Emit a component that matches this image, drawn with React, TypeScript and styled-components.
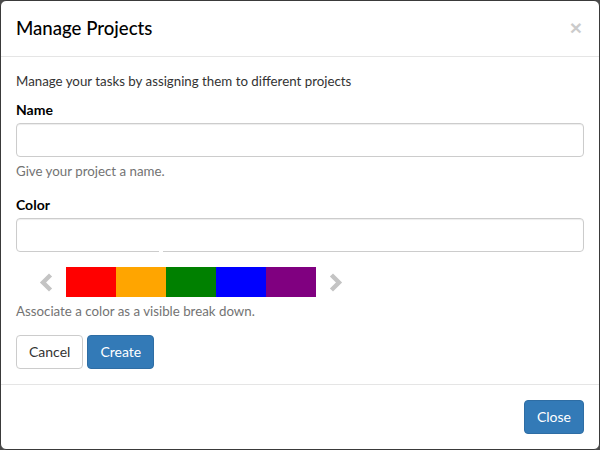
import styled, { createGlobalStyle } from 'styled-components';

const GlobalStyle = createGlobalStyle`
  html, body {
    margin: 0;
    padding: 0;
    background: #4a4a4a;
  }
  * {
    box-sizing: border-box;
  }
`;

const Modal = styled.div`
  width: 600px;
  height: 450px;
  background: #fff;
  border: 1px solid #3a3a3a;
  border-radius: 6px;
  font-family: 'Segoe UI', Lato, 'Liberation Sans', sans-serif;
  font-size: 13.3px;
  line-height: 20px;
  color: #333;
  display: flex;
  flex-direction: column;
  overflow: hidden;
`;

const Header = styled.div`
  display: flex;
  align-items: center;
  justify-content: space-between;
  padding: 15px;
  border-bottom: 1px solid #e5e5e5;
`;

const Title = styled.h4`
  margin: 0;
  font-size: 18.6px;
  font-weight: 500;
  line-height: 25px;
  color: #000;
`;

const CloseX = styled.button`
  border: none;
  background: none;
  padding: 0;
  font-family: 'Liberation Sans', sans-serif;
  font-size: 21px;
  font-weight: bold;
  line-height: 1;
  color: #000;
  opacity: 0.2;
  margin-top: -2px;
  margin-right: 2px;
`;

const Body = styled.div`
  padding: 14px 15px 15px;
  flex: 1;
`;

const Intro = styled.p`
  margin: 0 0 9px;
`;

const FormGroup = styled.div`
  margin-bottom: 14px;
`;

const Label = styled.label`
  display: block;
  font-weight: bold;
  font-size: 14px;
  color: #000;
  margin-bottom: 3px;
`;

const InputWrap = styled.div`
  position: relative;
`;

const Input = styled.input`
  display: block;
  width: 100%;
  height: 34px;
  padding: 6px 12px;
  border: 1px solid #ccc;
  border-radius: 4px;
  box-shadow: inset 0 1px 1px rgba(0, 0, 0, 0.075);
  font: inherit;
  color: #555;
`;

const Notch = styled.span`
  position: absolute;
  left: 143px;
  bottom: -1px;
  width: 4px;
  height: 3px;
  background: #fff;
`;

const Help = styled.span`
  display: block;
  margin-top: 4px;
  color: #737373;
`;

const Picker = styled.div`
  display: flex;
  align-items: center;
  margin-top: 15px;
  padding-left: 10px;
`;

const Arrow = styled.span`
  display: flex;
  width: 40px;
  justify-content: center;
`;

const Strip = styled.div`
  display: flex;
`;

const Swatch = styled.div<{ $color: string }>`
  width: 50px;
  height: 30px;
  background: ${(p) => p.$color};
`;

const Buttons = styled.div`
  display: flex;
  gap: 4px;
  margin-top: 14px;
`;

const Button = styled.button<{ $primary?: boolean }>`
  height: 34px;
  padding: 6px 12px;
  font: inherit;
  font-size: 14px;
  border-radius: 4px;
  border: 1px solid ${(p) => (p.$primary ? '#2e6da4' : '#ccc')};
  background: ${(p) => (p.$primary ? '#337ab7' : '#fff')};
  color: ${(p) => (p.$primary ? '#fff' : '#333')};
`;

const Footer = styled.div`
  display: flex;
  justify-content: flex-end;
  padding: 15px;
  border-top: 1px solid #e5e5e5;
`;

const Chevron = ({ dir }: { dir: 'left' | 'right' }) => (
  <svg width="14" height="19" viewBox="0 0 14 19">
    <polyline
      points={dir === 'left' ? '10,3.5 4,9.5 10,15.5' : '4,3.5 10,9.5 4,15.5'}
      fill="none"
      stroke="#c4c4c4"
      strokeWidth="4.4"
      strokeLinecap="square"
    />
  </svg>
);

const colors = ['#ff0000', '#ffa500', '#008000', '#0000ff', '#800080'];

export default function App() {
  return (
    <>
      <GlobalStyle />
      <Modal>
        <Header>
          <Title>Manage Projects</Title>
          <CloseX>×</CloseX>
        </Header>
        <Body>
          <Intro>Manage your tasks by assigning them to different projects</Intro>
          <FormGroup>
            <Label>Name</Label>
            <Input />
            <Help>Give your project a name.</Help>
          </FormGroup>
          <FormGroup>
            <Label>Color</Label>
            <InputWrap>
              <Input />
              <Notch />
            </InputWrap>
            <Picker>
              <Arrow>
                <Chevron dir="left" />
              </Arrow>
              <Strip>
                {colors.map((c) => (
                  <Swatch key={c} $color={c} />
                ))}
              </Strip>
              <Arrow>
                <Chevron dir="right" />
              </Arrow>
            </Picker>
            <Help>Associate a color as a visible break down.</Help>
          </FormGroup>
          <Buttons>
            <Button>Cancel</Button>
            <Button $primary>Create</Button>
          </Buttons>
        </Body>
        <Footer>
          <Button $primary>Close</Button>
        </Footer>
      </Modal>
    </>
  );
}
